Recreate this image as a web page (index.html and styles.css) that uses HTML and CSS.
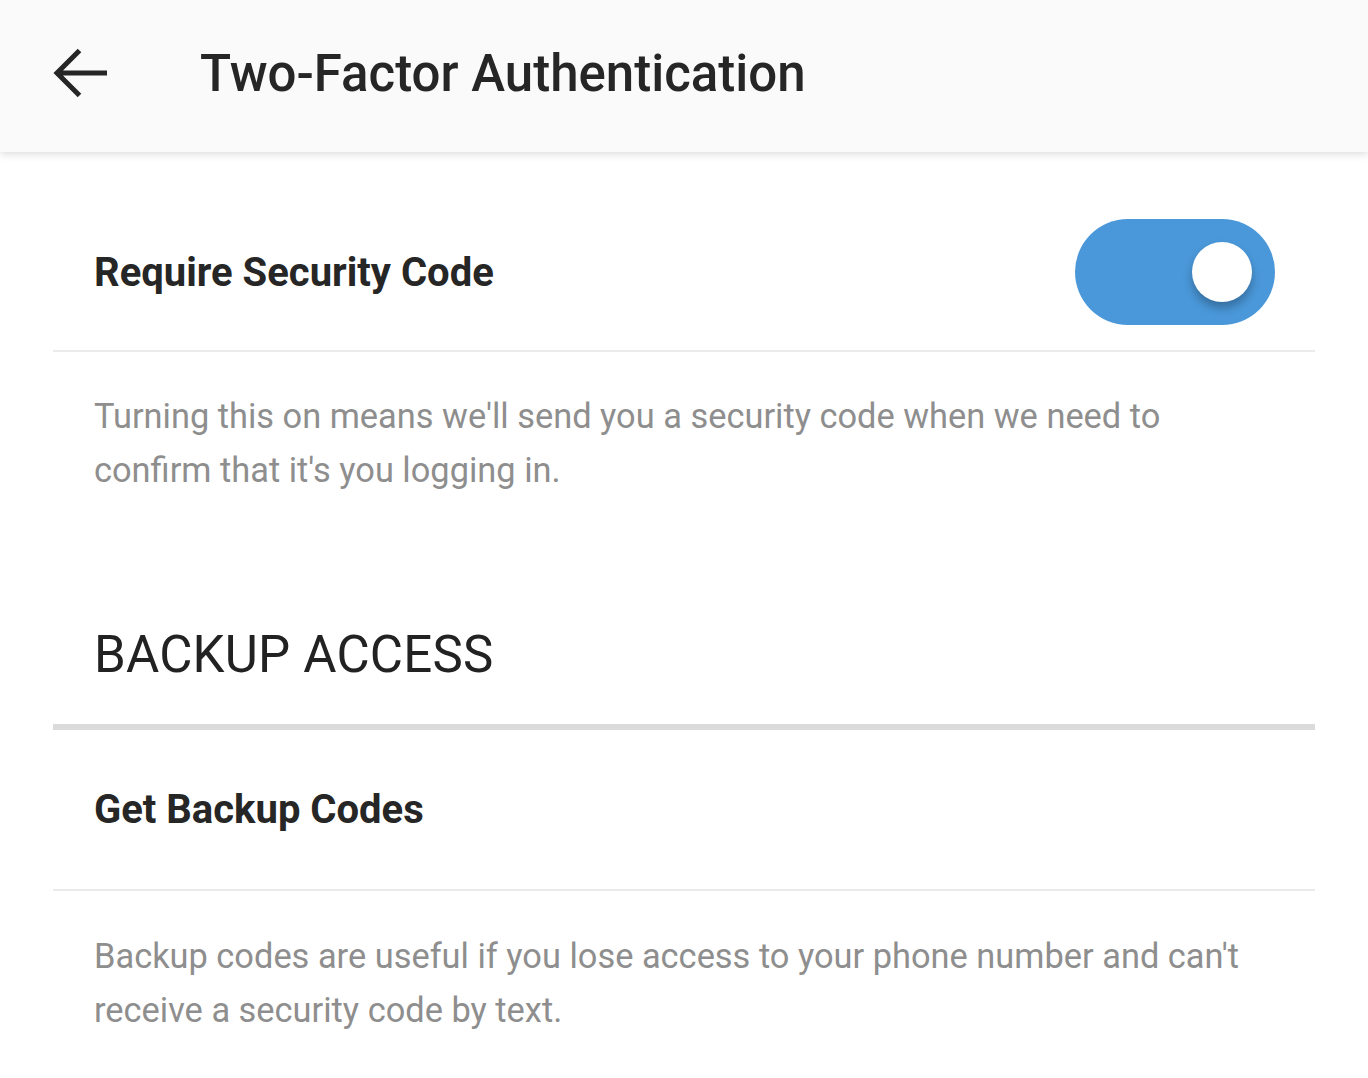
FILE: index.html
```html
<!DOCTYPE html>
<html>
<head>
<meta charset="utf-8">
<link rel="stylesheet" href="styles.css">
</head>
<body>
<header class="topbar">
  <button class="back" aria-label="Back">
    <svg width="56" height="56" viewBox="0 0 56 56"><path d="M55 28H5M27.5 5.5L5 28l22.5 22.5" fill="none" stroke="#262626" stroke-width="5"/></svg>
  </button>
  <h1 class="title">Two-Factor Authentication</h1>
</header>
<main class="content">
  <section class="row toggle-row">
    <span class="row-label">Require Security Code</span>
    <span class="switch"><span class="knob"></span></span>
  </section>
  <p class="desc desc-first">Turning this on means we'll send you a security code when we need to confirm that it's you logging in.</p>
  <h2 class="section-title">BACKUP ACCESS</h2>
  <section class="row link-row">
    <span class="row-label">Get Backup Codes</span>
  </section>
  <p class="desc">Backup codes are useful if you lose access to your phone number and can't receive a security code by text.</p>
</main>
</body>
</html>
```
FILE: styles.css
```css
html, body {
  margin: 0;
  padding: 0;
  background: #ffffff;
  font-family: Roboto, "Liberation Sans", sans-serif;
  color: #262626;
}
.topbar {
  height: 152px;
  box-sizing: border-box;
  padding-bottom: 6px;
  background: #fafafa;
  display: flex;
  align-items: center;
  padding-left: 52px;
  box-shadow: 0 2px 8px rgba(0,0,0,0.14);
  position: relative;
  z-index: 1;
}
.back {
  border: 0;
  background: none;
  padding: 0;
  width: 56px;
  height: 56px;
  display: flex;
}
.title {
  margin: 0 0 0 92px;
  font-size: 51px;
  font-weight: 500;
  color: #262626;
}
.content {
  margin: 0 53px;
}
.row {
  display: flex;
  align-items: center;
  justify-content: space-between;
  padding-left: 41px;
  padding-right: 40px;
  border-bottom: 2px solid #ebebeb;
}
.toggle-row {
  padding-top: 67px;
  padding-bottom: 25px;
}
.row-label {
  font-size: 40px;
  font-weight: 700;
  color: #262626;
}
.switch {
  width: 200px;
  height: 106px;
  border-radius: 53px;
  background: #4a98da;
  display: flex;
  align-items: center;
  justify-content: flex-end;
  padding-right: 23px;
  box-sizing: border-box;
}
.knob {
  width: 60px;
  height: 60px;
  border-radius: 50%;
  background: #fff;
  box-shadow: 0 6px 10px rgba(0,0,0,0.28);
}
.desc {
  margin: 0;
  padding: 38px 41px 0;
  font-size: 34.4px;
  line-height: 54px;
  color: #8e8e8e;
}
.desc-first {
  padding-top: 37px;
}
.section-title {
  margin: 0;
  padding: 128px 41px 39px;
  font-size: 51px;
  font-weight: 400;
  color: #222222;
  line-height: 60px;
  letter-spacing: 0.2px;
  border-bottom: 6px solid #dbdbdb;
}
.link-row {
  height: 159px;
}
```
